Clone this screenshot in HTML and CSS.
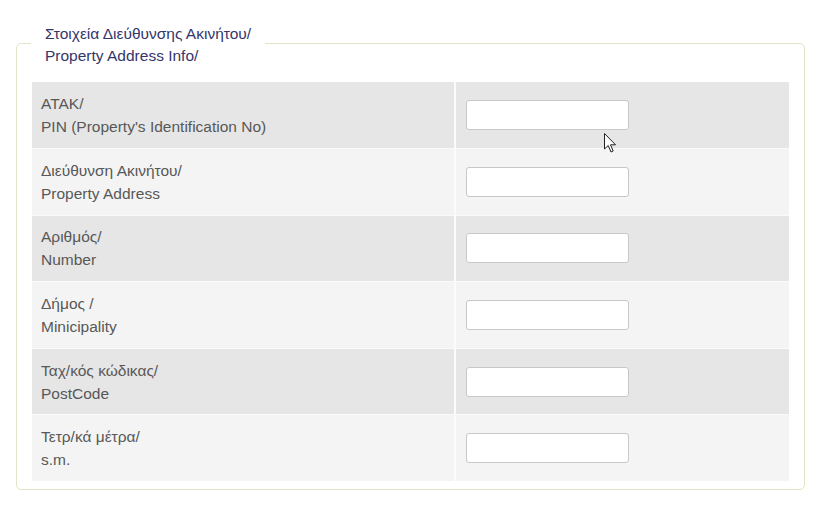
FILE: index.html
```html
<!DOCTYPE html>
<html>
<head>
<meta charset="utf-8">
<link rel="stylesheet" href="styles.css">
</head>
<body>
<fieldset class="box">
  <legend class="box-title">Στοιχεία Διεύθυνσης Ακινήτου/<br>Property Address Info/</legend>
  <table class="form-table">
    <tr class="row-odd"><td class="label">ATAK/<br>PIN (Property's Identification No)</td><td class="field"><input class="text-input" type="text"></td></tr>
    <tr class="row-even"><td class="label">Διεύθυνση Ακινήτου/<br>Property Address</td><td class="field"><input class="text-input" type="text"></td></tr>
    <tr class="row-odd"><td class="label">Αριθμός/<br>Number</td><td class="field"><input class="text-input" type="text"></td></tr>
    <tr class="row-even"><td class="label">Δήμος /<br>Minicipality</td><td class="field"><input class="text-input" type="text"></td></tr>
    <tr class="row-odd"><td class="label">Ταχ/κός κώδικας/<br>PostCode</td><td class="field"><input class="text-input" type="text"></td></tr>
    <tr class="row-even"><td class="label">Τετρ/κά μέτρα/<br>s.m.</td><td class="field"><input class="text-input" type="text"></td></tr>
  </table>
</fieldset>
<svg class="cursor" width="14" height="22" viewBox="0 0 14 22"><path d="M0.5 0.5 L0.5 16 L4.2 12.5 L7 19 L9.2 18 L6.5 11.8 L11.5 11.8 Z" fill="#fff" stroke="#222" stroke-width="1" stroke-linejoin="round"/></svg>
</body>
</html>
```
FILE: styles.css
```css
html, body {
  margin: 0;
  padding: 0;
  background: #fff;
}
body {
  padding: 19px 22px 0 16px;
  font-family: "Liberation Sans", Arial, sans-serif;
  position: relative;
}
.box {
  margin: 0;
  border: 1px solid #e3e3c8;
  border-radius: 5px;
  padding: 15px 15px 8px 15px;
  width: 757px;
}
.box-title {
  padding: 4px 14px 0 14px;
  margin-left: -1px;
  font-size: 15.5px;
  line-height: 22px;
  color: #35356a;
}
.form-table {
  width: 100%;
  border-collapse: collapse;
  table-layout: fixed;
}
.form-table td {
  border-top: 1px solid #fafafa;
  height: 65.6px;
  padding: 0;
  vertical-align: middle;
}
.form-table tr:first-child td {
  border-top: none;
  height: 66px;
}
.row-odd td { background: #e6e6e6; }
.row-even td { background: #f4f4f4; }
.label {
  width: 404px;
  padding: 0 9px !important;
  color: #585858;
  font-size: 15.5px;
  line-height: 23px;
}
.field {
  border-left: 2px solid #fbfbfb;
  padding-left: 10px !important;
}
.text-input {
  display: block;
  box-sizing: border-box;
  width: 163px;
  height: 30px;
  border: 1px solid #c8c8c8;
  border-radius: 3px;
  background: #fff;
  margin: 0;
  padding: 0 6px;
}
.cursor {
  position: absolute;
  left: 604px;
  top: 133px;
}
```
